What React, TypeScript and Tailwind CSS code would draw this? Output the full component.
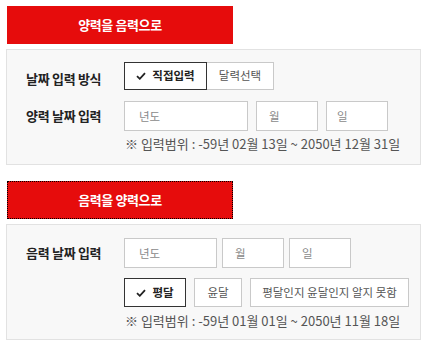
const font = { fontFamily: '"Noto Sans CJK KR", "Noto Sans", sans-serif' };

const Check = () => (
  <svg width="10" height="8" viewBox="0 0 10 8" className="shrink-0">
    <polyline
      points="1,4.2 3.8,6.8 9,1.2"
      fill="none"
      stroke="#222"
      strokeWidth="1.8"
    />
  </svg>
);

const DateInput = ({ placeholder, width, pl }: { placeholder: string; width: string; pl: string }) => (
  <input
    type="text"
    placeholder={placeholder}
    className={`${width} ${pl} h-[30px] bg-white border border-[#c9c9c9] text-[11.5px] text-[#333] placeholder:text-[#8a8a8a] outline-none`}
    style={font}
  />
);

const App = () => {
  return (
    <div className="w-[427px] h-[346px] bg-white pt-[6px]" style={font}>
      {/* 양력 -> 음력 */}
      <div className="ml-[7px] w-[226px] h-[38px] bg-[#e60c0c] flex items-center justify-center">
        <span className="text-white text-[13px] font-bold tracking-[-0.4px]">양력을 음력으로</span>
      </div>
      <div className="ml-[6px] mt-[5px] w-[415px] h-[116px] bg-[#f8f8f8] border border-[#e2e2e2] pl-[19px] pt-[12px]">
        <div className="flex items-center">
          <div className="w-[98px] pt-[5px] text-[13px] font-bold text-[#222] tracking-[-0.3px]">날짜 입력 방식</div>
          <div className="flex">
            <button className="w-[83px] h-[28px] bg-white border border-[#333] flex items-center justify-center gap-[6px] text-[11.5px] font-bold text-[#222]">
              <Check />
              직접입력
            </button>
            <button className="w-[67px] h-[28px] bg-white border border-[#c9c9c9] border-l-0 text-[11.5px] text-[#555]">
              달력선택
            </button>
          </div>
        </div>
        <div className="flex items-center mt-[11px]">
          <div className="w-[98px] text-[13px] font-bold text-[#222] tracking-[-0.3px]">양력 날짜 입력</div>
          <div className="flex gap-[8px]">
            <DateInput placeholder="년도" width="w-[124px]" pl="pl-[14px]" />
            <DateInput placeholder="월" width="w-[62px]" pl="pl-[12px]" />
            <DateInput placeholder="일" width="w-[62px]" pl="pl-[10px]" />
          </div>
        </div>
        <div className="ml-[99px] mt-[3px] text-[13px] text-[#555] proportional-nums">
          ※ 입력범위 : -59년 02월 13일 ~ 2050년 12월 31일
        </div>
      </div>

      {/* 음력 -> 양력 */}
      <div className="ml-[7px] mt-[16px] w-[226px] h-[38px] bg-[#e60c0c] border border-dotted border-black flex items-center justify-center">
        <span className="text-white text-[13px] font-bold tracking-[-0.4px]">음력을 양력으로</span>
      </div>
      <div className="ml-[6px] mt-[5px] w-[415px] h-[116px] bg-[#f8f8f8] border border-[#e2e2e2] pl-[19px] pt-[13px]">
        <div className="flex items-center">
          <div className="w-[98px] text-[13px] font-bold text-[#222] tracking-[-0.3px]">음력 날짜 입력</div>
          <div className="flex gap-[5px]">
            <DateInput placeholder="년도" width="w-[93px]" pl="pl-[14px]" />
            <DateInput placeholder="월" width="w-[62px]" pl="pl-[12px]" />
            <DateInput placeholder="일" width="w-[62px]" pl="pl-[12px]" />
          </div>
        </div>
        <div className="flex gap-[8px] ml-[98px] mt-[10px]">
          <button className="w-[62px] h-[29px] bg-white border border-[#333] flex items-center justify-center gap-[6px] text-[11.5px] font-bold text-[#222]">
            <Check />
            평달
          </button>
          <button className="w-[48px] h-[29px] bg-white border border-[#c9c9c9] text-[11.5px] text-[#555]">
            윤달
          </button>
          <button className="w-[159px] h-[29px] bg-white border border-[#c9c9c9] text-[11.5px] text-[#555]">
            평달인지 윤달인지 알지 못함
          </button>
        </div>
        <div className="ml-[99px] mt-[4px] text-[13px] text-[#555] proportional-nums">
          ※ 입력범위 : -59년 01월 01일 ~ 2050년 11월 18일
        </div>
      </div>
    </div>
  );
};

export default App;
